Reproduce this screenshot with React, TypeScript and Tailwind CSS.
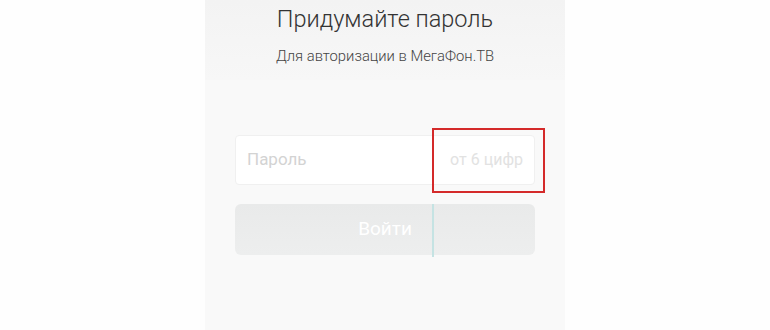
export default function App() {
  return (
    <div className="w-[770px] h-[330px] bg-[#fefefe] flex justify-center overflow-hidden" style={{ fontFamily: "Roboto, 'Noto Sans', sans-serif" }}>
      <div className="w-[360px] h-full bg-[#f9f9f9] flex flex-col">
        <div className="bg-gradient-to-b from-[#f3f3f3] to-[#f7f7f7] h-[80px] flex flex-col items-center">
          <h1 className="text-[23.5px] font-light text-[#333] leading-none mt-[8px]">Придумайте пароль</h1>
          <p className="text-[14.8px] font-light text-[#444] mt-[17px] leading-none">Для авторизации в МегаФон.ТВ</p>
        </div>
        <div className="relative px-[30px] pt-[55px]">
          <div className="h-[50px] bg-white border border-[#f0f0f0] rounded-[4px] flex items-center justify-between px-[11px]">
            <span className="text-[17px] text-[#d3d3d3]">Пароль</span>
            <span className="text-[16px] text-[#e2e2e2]">от 6 цифр</span>
          </div>
          <div className="absolute left-[227px] top-[48px] w-[113px] h-[65px] border-2 border-[#d42a2a]" />
          <div className="relative mt-[19px] h-[51px] bg-gradient-to-b from-[#e9eaea] to-[#edeeee] rounded-[6px] flex items-center justify-center">
            <span className="text-[19px] text-white">Войти</span>
            <div className="absolute left-[197px] top-0 w-[2px] h-[53px] bg-[#c5e3e3]" />
          </div>
        </div>
      </div>
    </div>
  );
}
